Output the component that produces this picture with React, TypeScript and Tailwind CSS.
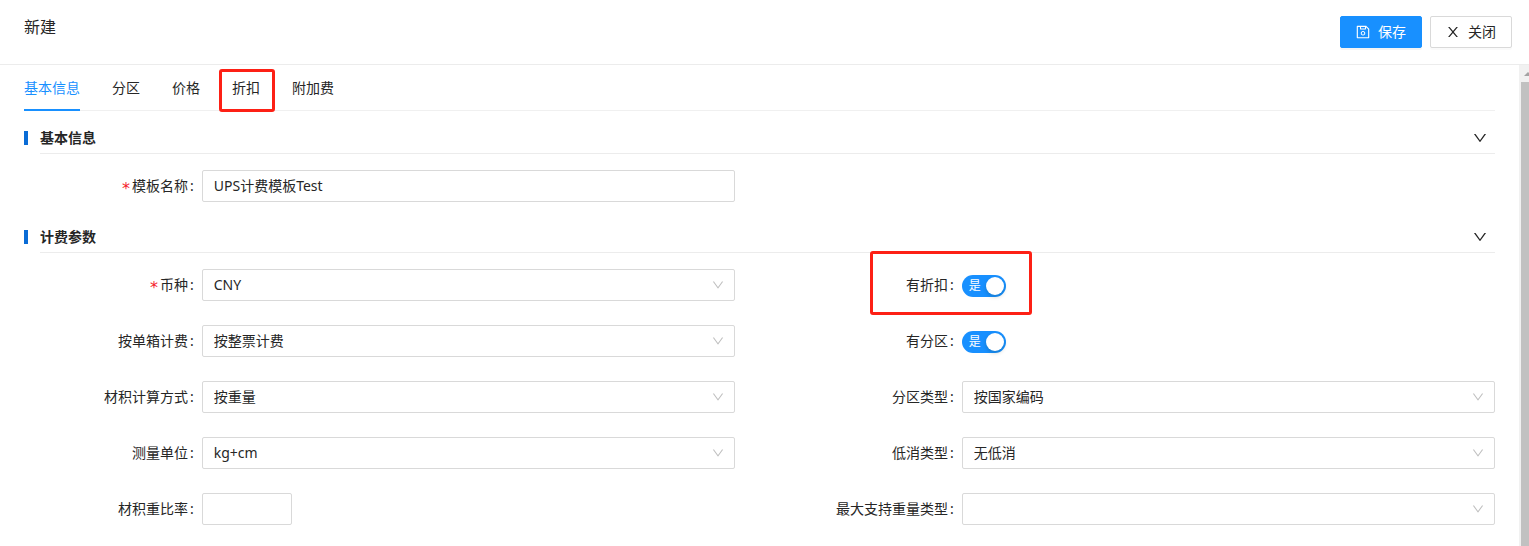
import { useState, type ReactNode } from 'react';

const ICONS = {
  down: 'M884 256h-75c-5.1 0-9.9 2.5-12.9 6.6L512 654.2 227.9 262.6c-3-4.1-7.8-6.6-12.9-6.6h-75c-6.5 0-10.3 7.4-6.5 12.7l352.6 486.1c12.8 17.6 39 17.6 51.7 0l352.6-486.1c3.9-5.3.1-12.7-6.4-12.7z',
  close:
    'M563.8 512l262.5-312.9c4.4-5.2.7-13.1-6.1-13.1h-79.8c-4.7 0-9.2 2.1-12.3 5.7L511.6 449.8 295.1 191.7c-3-3.6-7.5-5.7-12.3-5.7H203c-6.8 0-10.5 7.9-6.1 13.1L459.4 512 196.9 824.9A7.95 7.95 0 00203 838h79.8c4.7 0 9.2-2.1 12.3-5.7l216.5-258.1 216.5 258.1c3 3.6 7.5 5.7 12.3 5.7h79.8c6.8 0 10.5-7.9 6.1-13.1L563.8 512z',
  save: 'M893.3 293.3L730.7 130.7c-7.5-7.5-16.7-13-26.7-16V112H144c-17.7 0-32 14.3-32 32v736c0 17.7 14.3 32 32 32h736c17.7 0 32-14.3 32-32V338.5c0-17-6.7-33.2-18.7-45.2zM384 184h256v104H384V184zm456 656H184V184h136v136c0 17.7 14.3 32 32 32h320c17.7 0 32-14.3 32-32V205.8l136 136V840zM512 442c-79.5 0-144 64.5-144 144s64.5 144 144 144 144-64.5 144-144-64.5-144-144-144zm0 224c-44.2 0-80-35.8-80-80s35.8-80 80-80 80 35.8 80 80-35.8 80-80 80z',
};

function Icon({ name, className }: { name: keyof typeof ICONS; className: string }) {
  return (
    <svg viewBox="64 64 896 896" fill="currentColor" aria-hidden="true" className={className}>
      <path d={ICONS[name]} />
    </svg>
  );
}

function Field({ id, label, required, children }: { id: string; label: string; required?: boolean; children: ReactNode }) {
  return (
    <div className="grid grid-cols-4 items-center">
      <label htmlFor={id} className="flex h-8 items-center justify-end pr-2 whitespace-nowrap">
        {required && (
          <span className="mr-0.5 pt-1.5 font-['DejaVu_Sans'] text-base leading-none text-[#f5222d]">*</span>
        )}
        {label}
        <span className="ml-0.5">:</span>
      </label>
      <div className="col-span-3 flex h-8 items-center">{children}</div>
    </div>
  );
}

function Text({ id, value = '', className }: { id: string; value?: string; className: string }) {
  return (
    <input
      id={id}
      type="text"
      defaultValue={value}
      className={`h-8 rounded-xs border border-[#d9d9d9] bg-white px-[11px] pb-0.5 outline-none ${className}`}
    />
  );
}

function Select({ id, value = '' }: { id: string; value?: string }) {
  return (
    <div className="relative w-full">
      <select
        id={id}
        defaultValue={value}
        className="block h-8 w-full appearance-none rounded-xs border border-[#d9d9d9] bg-white pr-8 pl-[11px] outline-none"
      >
        <option value={value}>{value}</option>
      </select>
      <Icon name="down" className="pointer-events-none absolute top-[10px] right-[11px] size-3 text-[#bfbfbf]" />
    </div>
  );
}

function Switch({ id }: { id: string }) {
  const [on, setOn] = useState(true);
  return (
    <span className="relative mt-0.5 block h-[22px] w-11">
      <input
        id={id}
        type="checkbox"
        role="switch"
        checked={on}
        onChange={(e) => setOn(e.target.checked)}
        className="block h-[22px] w-11 appearance-none rounded-full bg-[#bfbfbf] checked:bg-[#1890ff]"
      />
      <span
        className={`pointer-events-none absolute top-0 text-xs leading-[22px] text-white ${on ? 'left-[7px]' : 'right-[7px]'}`}
      >
        {on ? '是' : '否'}
      </span>
      <span
        className={`pointer-events-none absolute top-0.5 size-[18px] rounded-full bg-white shadow-[0_2px_4px_rgba(0,35,11,0.2)] ${on ? 'right-0.5' : 'left-0.5'}`}
      />
    </span>
  );
}

function Section({ title, children }: { title: string; children: ReactNode }) {
  return (
    <section>
      <div className="flex gap-3">
        <span className="mt-1 h-3.5 w-1 bg-[#0a6cd6]" />
        <div className="flex flex-1 items-center justify-between border-b border-[#ececec] pr-2 pb-1">
          <h2 className="leading-[22px] font-bold">{title}</h2>
          <button type="button" aria-label={`收起${title}`}>
            <Icon name="down" className="size-3.5" />
          </button>
        </div>
      </div>
      <div className="grid grid-cols-2 gap-x-[49px] gap-y-6 pt-4 pb-6">{children}</div>
    </section>
  );
}

const TABS = ['基本信息', '分区', '价格', '折扣', '附加费'];

export default function App() {
  const [tab, setTab] = useState(TABS[0]);
  return (
    <div className="flex h-screen flex-col overflow-hidden bg-white font-['Noto_Sans','Noto_Sans_CJK_SC',sans-serif] text-sm text-[#262626]">
      <header className="flex justify-between border-b border-[#ececec] py-4 pr-[17px] pl-6">
        <h1 className="text-base leading-[22px]">新建</h1>
        <div className="flex gap-2">
          <button
            type="button"
            className="flex h-8 items-center gap-2 rounded-xs border border-[#1890ff] bg-[#1890ff] px-[15px] text-white shadow-[0_2px_0_rgba(0,0,0,0.04)]"
          >
            <Icon name="save" className="size-3.5" />
            保存
          </button>
          <button
            type="button"
            className="flex h-8 items-center gap-2 rounded-xs border border-[#d9d9d9] bg-white px-[15px] shadow-[0_2px_0_rgba(0,0,0,0.02)]"
          >
            <Icon name="close" className="size-3.5" />
            关闭
          </button>
        </div>
      </header>

      <div className="flex min-h-0 flex-1">
        <main className="min-w-0 flex-1 overflow-hidden px-6">
          <div role="tablist" className="mb-4 flex gap-8 shadow-[inset_0_-1px_0_#f0f0f0]">
            {TABS.map((name) => (
              <button
                key={name}
                type="button"
                role="tab"
                aria-selected={tab === name}
                onClick={() => setTab(name)}
                className={`relative border-b-2 pt-3 pb-2.5 leading-[22px] ${
                  tab === name ? 'border-[#1890ff] text-[#1890ff]' : 'border-transparent'
                }`}
              >
                {name}
                {name === '折扣' && (
                  <span className="pointer-events-none absolute top-1 -right-[15px] -bottom-[3px] -left-[13px] rounded-[3px] border-3 border-[#fd2015]" />
                )}
              </button>
            ))}
          </div>

          <Section title="基本信息">
            <Field id="name" label="模板名称" required>
              <Text id="name" value="UPS计费模板Test" className="w-full" />
            </Field>
          </Section>

          <Section title="计费参数">
            <Field id="currency" label="币种" required>
              <Select id="currency" value="CNY" />
            </Field>
            <div className="relative">
              <Field id="discount" label="有折扣">
                <Switch id="discount" />
              </Field>
              <span className="pointer-events-none absolute -top-[18px] left-[86px] h-16 w-[162px] rounded-[3px] border-3 border-[#fd2015]" />
            </div>
            <Field id="charge" label="按单箱计费">
              <Select id="charge" value="按整票计费" />
            </Field>
            <Field id="zone" label="有分区">
              <Switch id="zone" />
            </Field>
            <Field id="volume" label="材积计算方式">
              <Select id="volume" value="按重量" />
            </Field>
            <Field id="zone-type" label="分区类型">
              <Select id="zone-type" value="按国家编码" />
            </Field>
            <Field id="unit" label="测量单位">
              <Select id="unit" value="kg+cm" />
            </Field>
            <Field id="minimum" label="低消类型">
              <Select id="minimum" value="无低消" />
            </Field>
            <Field id="ratio" label="材积重比率">
              <Text id="ratio" className="w-[90px]" />
            </Field>
            <Field id="max-weight" label="最大支持重量类型">
              <Select id="max-weight" />
            </Field>
          </Section>
        </main>

        <div aria-hidden="true" className="flex w-[10px] flex-col overflow-hidden bg-[#f1f1f1]">
          <svg viewBox="0 0 17 17" className="size-[17px] shrink-0 fill-[#a3a3a3]">
            <path d="M9 7 L13 11 H5 Z" />
          </svg>
          <div className="ml-0.5 flex-1 bg-[#c1c1c1]" />
        </div>
      </div>
    </div>
  );
}
